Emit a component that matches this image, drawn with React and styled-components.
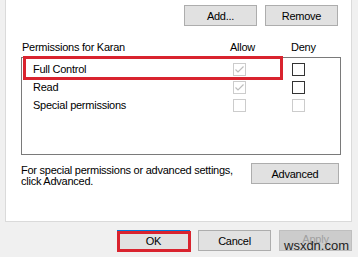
import React from "react";
import styled, { createGlobalStyle } from "styled-components";

const Global = createGlobalStyle`
  html, body { margin: 0; padding: 0; }
  body {
    background: #f0f0f0;
    font-family: "Liberation Sans", Arial, sans-serif;
    font-size: 11px;
    letter-spacing: -0.25px;
    color: #000;
  }
`;

const Page = styled.div`
  position: relative;
  width: 358px;
  height: 257px;
  overflow: hidden;
  background: #f0f0f0;
`;

const Panel = styled.div`
  margin-left: 5px;
  background: #fff;
  border: 1px solid #dadada;
  border-top: none;
  padding: 5px 13px 0 15px;
  box-sizing: border-box;
  width: 347px;
  height: 222px;
`;

const TopBar = styled.div`
  display: flex;
  justify-content: flex-end;
  gap: 8px;
`;

const Button = styled.button`
  position: relative;
  width: ${(p) => p.$w || 73}px;
  height: 21px;
  padding: 0 0 ${(p) => (p.$disabled ? 3 : 0)}px;
  margin: 0;
  box-sizing: border-box;
  background: ${(p) => (p.$disabled ? "#cccccc" : "#e1e1e1")};
  border: 1px solid ${(p) => (p.$focus ? "#0078d7" : p.$disabled ? "#bfbfbf" : "#adadad")};
  color: ${(p) => (p.$disabled ? "#a0a0a0" : "#000")};
  font-family: inherit;
  font-size: 11px;
  letter-spacing: -0.25px;
  line-height: 16px;
  text-align: center;
  &::after {
    content: "";
    display: ${(p) => (p.$mark ? "block" : "none")};
    position: absolute;
    left: -1px;
    right: -2px;
    top: 0px;
    bottom: -2px;
    border: 3px solid #d9232e;
  }
`;

const Header = styled.div`
  display: grid;
  grid-template-columns: 208px 61px auto;
  height: 31px;
  align-items: end;
  padding-left: 1px;
  padding-bottom: 3px;
  box-sizing: border-box;
  line-height: 14px;
`;

const ListBox = styled.div`
  position: relative;
  width: 320px;
  height: 98px;
  box-sizing: border-box;
  border: 1px solid #7a7a7a;
  padding: 2px 0 0 11px;
`;

const Row = styled.div`
  display: grid;
  grid-template-columns: 200px 59px 13px;
  height: 18px;
  align-items: center;
  line-height: 14px;
`;

const Box = styled.span`
  display: block;
  width: 13px;
  height: 13px;
  box-sizing: border-box;
  border: 1px solid ${(p) => (p.$disabled ? "#cccccc" : "#333333")};
  background: #fff;
  svg { display: block; }
`;

const Highlight = styled.div`
  position: absolute;
  left: 1px;
  top: -2px;
  width: 260px;
  height: 24px;
  box-sizing: border-box;
  border: 3px solid #d9232e;
  pointer-events: none;
`;

const Bottom = styled.div`
  display: flex;
  justify-content: space-between;
  align-items: flex-start;
  margin-top: 8px;
  width: 318px;
`;

const Note = styled.div`
  padding-top: 2px;
  line-height: 11px;
`;

const Footer = styled.div`
  display: flex;
  justify-content: flex-end;
  gap: 8px;
  padding: 8px 6px 0 0;
`;

const Watermark = styled.div`
  position: absolute;
  left: 284px;
  top: 238px;
  font-family: "Liberation Sans", Arial, sans-serif;
  font-size: 13px;
  letter-spacing: 0;
  line-height: 15px;
  color: #1e1e1e;
`;

const Check = ({ checked, disabled }) => (
  <Box $disabled={disabled}>
    {checked && (
      <svg width="11" height="11" viewBox="0 0 11 11">
        <polyline points="1.5,5.5 4,8 9.5,2.5" fill="none" stroke="#bdbdbd" strokeWidth="1.2" />
      </svg>
    )}
  </Box>
);

const rows = [
  { name: "Full Control", allow: true, allowDis: true, denyDis: false },
  { name: "Read", allow: true, allowDis: true, denyDis: false },
  { name: "Special permissions", allow: false, allowDis: true, denyDis: true },
];

export default function App() {
  return (
    <Page>
      <Global />
      <Panel>
        <TopBar>
          <Button>Add...</Button>
          <Button>Remove</Button>
        </TopBar>
        <Header>
          <span>Permissions for Karan</span>
          <span>Allow</span>
          <span>Deny</span>
        </Header>
        <ListBox>
          <Highlight />
          {rows.map((r) => (
            <Row key={r.name}>
              <span>{r.name}</span>
              <Check checked={r.allow} disabled={r.allowDis} />
              <Check checked={false} disabled={r.denyDis} />
            </Row>
          ))}
        </ListBox>
        <Bottom>
          <Note>
            For special permissions or advanced settings,
            <br />
            click Advanced.
          </Note>
          <Button $w={88}>Advanced</Button>
        </Bottom>
      </Panel>
      <Footer>
        <Button $focus $mark>OK</Button>
        <Button>Cancel</Button>
        <Button $disabled>Apply</Button>
      </Footer>
      <Watermark>wsxdn.com</Watermark>
    </Page>
  );
}
